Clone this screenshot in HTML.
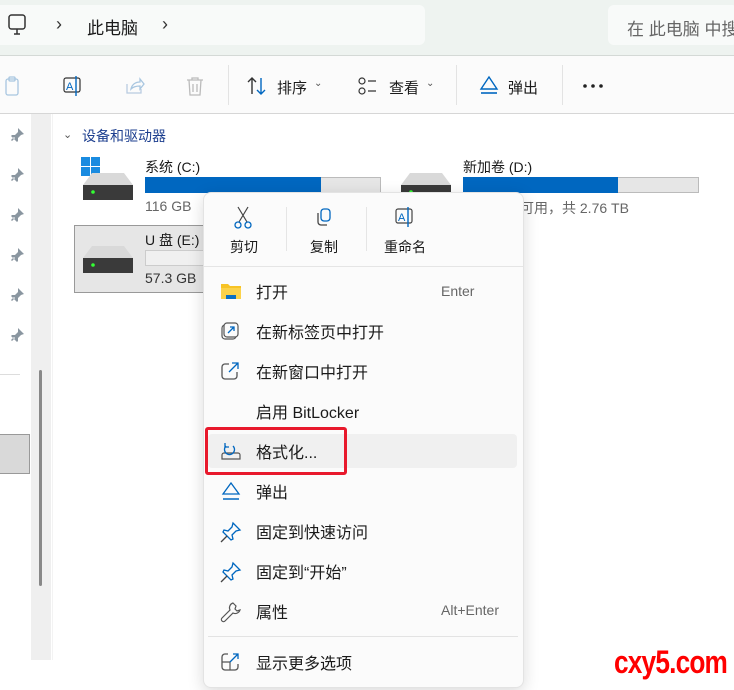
<!DOCTYPE html>
<html><head><meta charset="utf-8"><style>
*{margin:0;padding:0;box-sizing:border-box}
body{width:734px;height:690px;overflow:hidden;background:#fff;font-family:"Liberation Sans","Noto Sans CJK SC",sans-serif;position:relative;color:#1a1a1a}
.a{position:absolute}
.t{position:absolute;white-space:nowrap}
.mi{position:absolute;left:256px;font-size:16px;color:#1a1a1a}
.sc{position:absolute;left:441px;font-size:14px;color:#666}
.ic{position:absolute;left:220px}
</style></head><body>
<!-- top bar -->
<div class="a" style="left:0;top:0;width:734px;height:55px;background:#eef3f0"></div>
<div class="a" style="left:0;top:5px;width:425px;height:40px;background:#f8faf9;border-radius:0 6px 6px 0"></div>
<div class="a" style="left:608px;top:5px;width:130px;height:40px;background:#f8faf9;border-radius:6px"></div>
<svg class="a" style="left:6px;top:13px" width="24" height="24" viewBox="0 0 24 24"><rect x="3" y="2" width="16" height="14" rx="2.5" fill="none" stroke="#333" stroke-width="1.5"/><path d="M8 21h6M11 16v5" stroke="#333" stroke-width="1.5"/></svg>
<div class="t" style="left:56px;top:14px;font-size:18px;color:#333">›</div>
<div class="t" style="left:87px;top:14px;font-size:17px">此电脑</div>
<div class="t" style="left:162px;top:14px;font-size:18px;color:#333">›</div>
<div class="t" style="left:627px;top:15px;font-size:17px;color:#666">在 此电脑 中搜</div>
<div class="a" style="left:0;top:55px;width:734px;height:1px;background:#d4d9d6"></div>
<!-- toolbar -->
<div class="a" style="left:0;top:56px;width:734px;height:57px;background:#fbfbfb"></div>
<svg class="a" style="left:4px;top:75px" width="20" height="22"><rect x="2" y="4" width="12" height="16" rx="2" fill="none" stroke="#a8c6e0" stroke-width="1.3"/><rect x="5" y="2" width="6" height="4" rx="1" fill="none" stroke="#a8c6e0" stroke-width="1.3"/></svg>
<svg class="a" style="left:62px;top:74px" width="24" height="24"><rect x="2" y="4" width="16" height="14" rx="2" fill="none" stroke="#333" stroke-width="1.2"/><text x="4" y="16" font-size="11" fill="#0067c0" font-family="Liberation Sans">A</text><path d="M14 2v20" stroke="#0067c0" stroke-width="1.4"/></svg>
<svg class="a" style="left:124px;top:75px" width="22" height="22"><path d="M3 9v9h14v-4" fill="none" stroke="#b8cbe0" stroke-width="1.3"/><path d="M7 14c1-5 5-7 9-7V4l4 5-4 5v-3c-4 0-7 1-9 3z" fill="none" stroke="#a8c6e0" stroke-width="1.3"/></svg>
<svg class="a" style="left:185px;top:75px" width="20" height="22"><path d="M2 5h16M7 5V3h6v2M4 5l1 15h10l1-15M8 9v8M12 9v8" fill="none" stroke="#bbb" stroke-width="1.3"/></svg>
<div class="a" style="left:228px;top:65px;width:1px;height:40px;background:#e3e3e3"></div>
<svg class="a" style="left:246px;top:76px" width="22" height="20"><path d="M15 2v16M11 14l4 4 4-4" fill="none" stroke="#0067c0" stroke-width="1.4"/><path d="M6 18V2M2 6l4-4 4 4" fill="none" stroke="#333" stroke-width="1.4"/></svg>
<div class="t" style="left:277px;top:77px;font-size:15px">排序</div><div class="t" style="left:314px;top:78px;font-size:10px;color:#555">⌄</div>
<svg class="a" style="left:358px;top:77px" width="24" height="20"><circle cx="4" cy="4" r="3" fill="none" stroke="#333" stroke-width="1.2"/><circle cx="4" cy="14" r="3" fill="none" stroke="#333" stroke-width="1.2"/><path d="M10 4h8M10 14h8" stroke="#333" stroke-width="1.3"/></svg>
<div class="t" style="left:389px;top:77px;font-size:15px">查看</div><div class="t" style="left:426px;top:78px;font-size:10px;color:#555">⌄</div>
<div class="a" style="left:456px;top:65px;width:1px;height:40px;background:#e3e3e3"></div>
<svg class="a" style="left:478px;top:74px" width="22" height="22"><path d="M11 3l8 12H3z" fill="none" stroke="#0067c0" stroke-width="1.4"/><path d="M3 19h16" stroke="#0067c0" stroke-width="1.6"/></svg>
<div class="t" style="left:508px;top:77px;font-size:15px">弹出</div>
<div class="a" style="left:562px;top:65px;width:1px;height:40px;background:#e3e3e3"></div>
<svg class="a" style="left:582px;top:83px" width="24" height="6"><circle cx="3" cy="3" r="1.8" fill="#222"/><circle cx="11" cy="3" r="1.8" fill="#222"/><circle cx="19" cy="3" r="1.8" fill="#222"/></svg>
<div class="a" style="left:0;top:113px;width:734px;height:1px;background:#d6d6d6"></div>
<!-- sidebar -->
<div class="a" style="left:31px;top:114px;width:20px;height:546px;background:#efefef"></div>
<div class="a" style="left:52px;top:114px;width:1px;height:546px;background:#f3f3f3"></div>
<div class="a" style="left:39px;top:370px;width:3px;height:216px;background:#888;border-radius:2px"></div>
<div class="a" style="left:0;top:374px;width:20px;height:1px;background:#ddd"></div>
<div class="a" style="left:0;top:434px;width:30px;height:40px;background:#d9d9d9;border:1px solid #999;border-left:none"></div>
<svg class="a" style="left:10px;top:126px" width="20" height="220">
<defs><path id="p" d="M8 2l6 6-3 1-3 3 0 3-1 1-6-6 1-1 3 0 3-3z M4 11l-3 3 1 1 3-3z"/></defs>
<g fill="#8a96a0"><use href="#p"/><use href="#p" y="40"/><use href="#p" y="80"/><use href="#p" y="120"/><use href="#p" y="160"/><use href="#p" y="200"/></g>
</svg>
<!-- content -->
<div class="t" style="left:63px;top:128px;font-size:11px;color:#555">⌄</div>
<div class="t" style="left:82px;top:126px;font-size:14px;color:#1d3f8f">设备和驱动器</div>
<svg class="a" style="left:80px;top:155px" width="60" height="50"><rect x="1" y="2" width="9" height="9" fill="#1a8be0"/><rect x="11" y="2" width="9" height="9" fill="#1a8be0"/><rect x="1" y="12" width="9" height="9" fill="#1a8be0"/><rect x="11" y="12" width="9" height="9" fill="#1a8be0"/><path d="M3 30l9-12h32l9 12z" fill="#d9d9d9"/><rect x="3" y="30" width="50" height="15" fill="#3a3a3a"/><circle cx="13" cy="37" r="1.8" fill="#3f3"/></svg>
<div class="t" style="left:145px;top:157px;font-size:14px">系统 (C:)</div>
<div class="a" style="left:145px;top:177px;width:236px;height:16px;background:#e6e6e6;border:1px solid #bbb"></div>
<div class="a" style="left:145px;top:177px;width:176px;height:16px;background:#0067c0"></div>
<div class="t" style="left:145px;top:198px;font-size:14px;color:#666">116 GB</div>
<svg class="a" style="left:398px;top:165px" width="60" height="40"><path d="M3 20l9-12h32l9 12z" fill="#d9d9d9"/><rect x="3" y="20" width="50" height="15" fill="#3a3a3a"/><circle cx="13" cy="27" r="1.8" fill="#3f3"/></svg>
<div class="t" style="left:463px;top:157px;font-size:14px">新加卷 (D:)</div>
<div class="a" style="left:463px;top:177px;width:236px;height:16px;background:#e6e6e6;border:1px solid #bbb"></div>
<div class="a" style="left:463px;top:177px;width:155px;height:16px;background:#0067c0"></div>
<div class="t" style="left:520px;top:198px;font-size:14px;color:#666">可用，共 2.76 TB</div>
<div class="a" style="left:74px;top:225px;width:140px;height:68px;background:#e6e6e6;border:1px solid #999"></div>
<svg class="a" style="left:80px;top:238px" width="60" height="40"><path d="M3 20l9-12h32l9 12z" fill="#d9d9d9"/><rect x="3" y="20" width="50" height="15" fill="#3a3a3a"/><circle cx="13" cy="27" r="1.8" fill="#3f3"/></svg>
<div class="t" style="left:145px;top:230px;font-size:14px">U 盘 (E:)</div>
<div class="a" style="left:145px;top:250px;width:70px;height:16px;background:#f0f0f0;border:1px solid #ccc"></div>
<div class="t" style="left:145px;top:270px;font-size:14px;color:#333">57.3 GB</div>
<!-- menu -->
<div class="a" style="left:203px;top:192px;width:321px;height:496px;background:#fbfbfb;border:1px solid #e3e3e3;border-radius:8px;box-shadow:0 4px 16px rgba(0,0,0,.15)"></div>
<svg class="a" style="left:232px;top:206px" width="22" height="24"><path d="M6 1l9 15M16 1L7 16" stroke="#444" stroke-width="1.2"/><circle cx="6" cy="19" r="3" fill="none" stroke="#0067c0" stroke-width="1.3"/><circle cx="16" cy="19" r="3" fill="none" stroke="#0067c0" stroke-width="1.3"/></svg>
<div class="t" style="left:230px;top:237px;font-size:14px">剪切</div>
<div class="a" style="left:286px;top:207px;width:1px;height:44px;background:#e5e5e5"></div>
<svg class="a" style="left:314px;top:207px" width="22" height="22"><rect x="7" y="2" width="9" height="12" rx="3" fill="none" stroke="#0067c0" stroke-width="1.3"/><path d="M4 6v9a3 3 0 003 3h6" fill="none" stroke="#444" stroke-width="1.3"/></svg>
<div class="t" style="left:310px;top:237px;font-size:14px">复制</div>
<div class="a" style="left:366px;top:207px;width:1px;height:44px;background:#e5e5e5"></div>
<svg class="a" style="left:394px;top:206px" width="24" height="24"><rect x="2" y="3" width="16" height="14" rx="2" fill="none" stroke="#444" stroke-width="1.2"/><text x="4" y="15" font-size="11" fill="#0067c0" font-family="Liberation Sans">A</text><path d="M14 1v20" stroke="#0067c0" stroke-width="1.4"/></svg>
<div class="t" style="left:384px;top:237px;font-size:14px">重命名</div>
<div class="a" style="left:204px;top:266px;width:319px;height:1px;background:#e5e5e5"></div>
<div class="a" style="left:208px;top:434px;width:309px;height:34px;background:#f0f0f0;border-radius:4px"></div>
<div class="a" style="left:205px;top:427px;width:142px;height:48px;border:3.5px solid #e8192c;border-radius:3px"></div>
<svg class="ic" style="top:281px" width="22" height="20"><path d="M1 3h7l2 2h11v13H1z" fill="#f7c325"/><rect x="1" y="7" width="20" height="11" fill="#fbd24a"/><rect x="6" y="14" width="10" height="4" fill="#0a6fc2"/></svg>
<div class="mi" style="top:279px">打开</div><div class="sc" style="top:283px">Enter</div>
<svg class="ic" style="top:321px" width="20" height="20"><rect x="2" y="4" width="14" height="14" rx="3" fill="none" stroke="#555" stroke-width="1.2"/><rect x="4" y="2" width="14" height="14" rx="3" fill="#fbfbfb" stroke="#555" stroke-width="1.2"/><path d="M8 12l6-6M10 6h4v4" fill="none" stroke="#0067c0" stroke-width="1.3"/></svg>
<div class="mi" style="top:319px">在新标签页中打开</div>
<svg class="ic" style="top:361px" width="20" height="20"><path d="M9 3H5a3 3 0 00-3 3v9a3 3 0 003 3h9a3 3 0 003-3v-4" fill="none" stroke="#555" stroke-width="1.3"/><path d="M9 11l9-9M12 2h6v6" fill="none" stroke="#0067c0" stroke-width="1.3"/></svg>
<div class="mi" style="top:359px">在新窗口中打开</div>
<div class="mi" style="top:399px">启用 BitLocker</div>
<svg class="ic" style="top:441px" width="22" height="20"><path d="M2 18h18v-4a2 2 0 00-2-2H4a2 2 0 00-2 2z" fill="none" stroke="#555" stroke-width="1.2"/><path d="M6 5a5 5 0 107 0" fill="none" stroke="#0067c0" stroke-width="1.3"/><path d="M5 2v4h4" fill="none" stroke="#0067c0" stroke-width="1.3"/></svg>
<div class="mi" style="top:439px">格式化...</div>
<svg class="ic" style="top:481px" width="22" height="20"><path d="M11 2l8 11H3z" fill="none" stroke="#0067c0" stroke-width="1.3"/><path d="M3 18h16" stroke="#0067c0" stroke-width="1.5"/></svg>
<div class="mi" style="top:479px">弹出</div>
<svg class="ic" style="top:521px" width="22" height="22"><path d="M13 2l7 7-4 1-4 4 1 4-2 1-8-8 1-2 4 1 4-4z" fill="none" stroke="#0067c0" stroke-width="1.3"/><path d="M7 15l-6 6" stroke="#444" stroke-width="1.3"/></svg>
<div class="mi" style="top:519px">固定到快速访问</div>
<svg class="ic" style="top:561px" width="22" height="22"><path d="M13 2l7 7-4 1-4 4 1 4-2 1-8-8 1-2 4 1 4-4z" fill="none" stroke="#0067c0" stroke-width="1.3"/><path d="M7 15l-6 6" stroke="#444" stroke-width="1.3"/></svg>
<div class="mi" style="top:559px">固定到“开始”</div>
<svg class="ic" style="top:601px" width="22" height="22"><path d="M13 2a5 5 0 00-3 7L2 17a2 2 0 003 3l8-8a5 5 0 007-3l-3 1-2-2 1-3z" fill="none" stroke="#555" stroke-width="1.2"/></svg>
<div class="mi" style="top:599px">属性</div><div class="sc" style="top:602px">Alt+Enter</div>
<div class="a" style="left:208px;top:636px;width:310px;height:1px;background:#e3e3e3"></div>
<svg class="ic" style="top:652px" width="20" height="20"><path d="M8 2H5a3 3 0 00-3 3v10a3 3 0 003 3h10a3 3 0 003-3v-3" fill="none" stroke="#555" stroke-width="1.3"/><path d="M2 10h8v8" fill="none" stroke="#555" stroke-width="1.2"/><path d="M10 10l8-8M13 2h5v5" fill="none" stroke="#0067c0" stroke-width="1.3"/></svg>
<div class="mi" style="top:650px">显示更多选项</div>
<div class="t" style="left:614px;top:644px;font-size:32px;font-weight:bold;color:#f00;transform:scaleX(0.82);transform-origin:left;letter-spacing:-1px">cxy5.com</div>
</body></html>
